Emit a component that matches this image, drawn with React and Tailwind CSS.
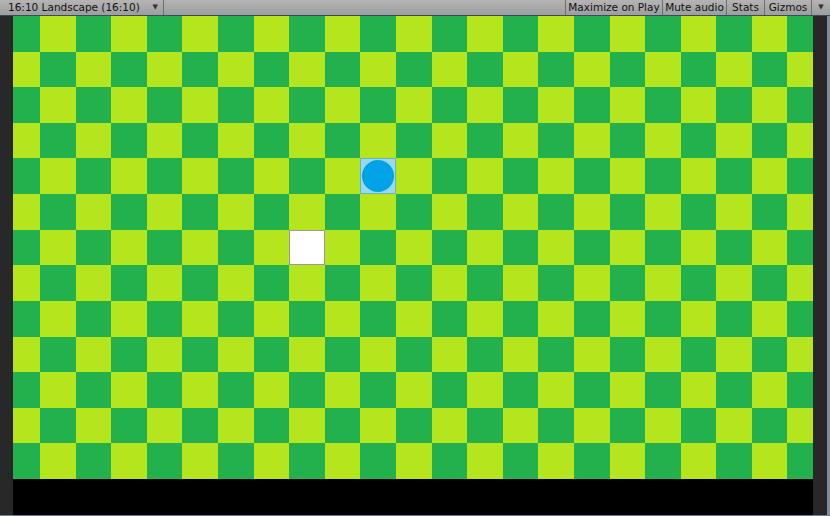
import React from 'react';

const ROWS = 13;
const COLS = 23;

// Board pieces, by grid row / column
const BALL = { r: 4, c: 10 };
const BLOCK = { r: 6, c: 8 };

function Cell({ r, c }) {
  if (r === BALL.r && c === BALL.c) {
    return (
      <div className="flex items-center justify-center bg-[#99d9ea] border border-[#5fb6c6]">
        <div className="w-[32px] h-[32px] rounded-full bg-[#00a2e8]" />
      </div>
    );
  }
  if (r === BLOCK.r && c === BLOCK.c) {
    return <div className="bg-white border border-[#9a9a9a]" />;
  }
  const dark = (r + c) % 2 === 0;
  return <div className={dark ? 'bg-[#22b14c]' : 'bg-[#b5e61d]'} />;
}

function ToolButton({ children, className = '' }) {
  return (
    <div className={`h-full shrink-0 whitespace-nowrap flex items-center border-l border-[#6f6f6f] ${className}`}>
      {children}
    </div>
  );
}

function Caret() {
  return <span className="text-[7px] text-[#333] leading-none">▼</span>;
}

export default function App() {
  const cells = [];
  for (let r = 0; r < ROWS; r++) {
    for (let c = 0; c < COLS; c++) {
      cells.push(<Cell key={`${r}-${c}`} r={r} c={c} />);
    }
  }

  return (
    <div className="w-[830px] h-[516px] bg-[#282828] flex flex-col overflow-hidden" style={{ fontFamily: '"DejaVu Sans", sans-serif' }}>
      {/* Toolbar */}
      <div className="h-[16px] flex items-stretch bg-gradient-to-b from-[#b4b4b4] to-[#9e9e9e] border-b border-[#3d4a66] text-[10.5px] leading-none text-[#111] shrink-0">
        <div className="w-[164px] shrink-0 whitespace-nowrap flex items-center justify-between pl-[8px] pr-[5px] border-r border-[#6f6f6f]">
          <span>16:10 Landscape (16:10)</span>
          <Caret />
        </div>
        <div className="flex-1" />
        <ToolButton className="w-[97px] justify-center">Maximize on Play</ToolButton>
        <ToolButton className="w-[64px] justify-center">Mute audio</ToolButton>
        <ToolButton className="w-[38px] justify-center">Stats</ToolButton>
        <ToolButton className="w-[47px] justify-center">Gizmos</ToolButton>
        <ToolButton className="w-[19px] justify-center">
          <Caret />
        </ToolButton>
      </div>

      {/* Game view */}
      <div className="flex flex-1">
        <div className="w-[13px] bg-[#282828]" />
        <div className="w-[800px] flex flex-col">
          <div className="h-[463px] grid grid-cols-[27px_repeat(21,35.6px)_1fr] grid-rows-[repeat(13,1fr)]">
            {cells}
          </div>
          <div className="flex-1 bg-black" />
        </div>
        <div className="w-[14px] bg-[#282828]" />
        <div className="w-[3px] bg-[#7f8c9a]" />
      </div>
      <div className="h-[1px] bg-[#6c7f99]" />
    </div>
  );
}
